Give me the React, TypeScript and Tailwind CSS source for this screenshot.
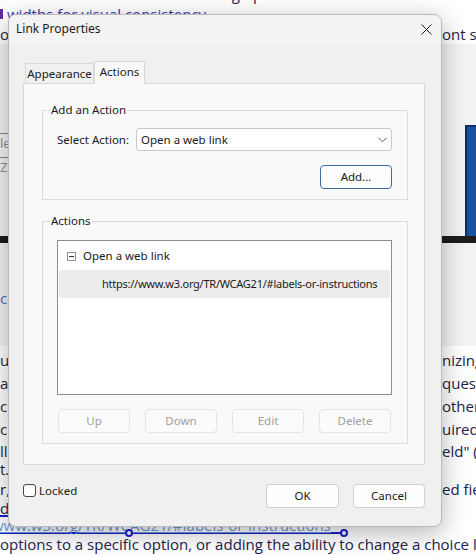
import React from "react";

function DocLine({ left, right, h }: { left: React.ReactNode; right?: React.ReactNode; h: string }) {
  return (
    <div className={"grid grid-cols-[442px_34px] leading-[20px] whitespace-nowrap " + h}>
      <span className="overflow-hidden">{left}</span>
      <span className="overflow-hidden">{right}</span>
    </div>
  );
}

function Doc() {
  return (
    <div className="flex flex-col font-['Open_Sans',sans-serif] text-[15px] text-[#23234a]">
      <div className="-mt-[16px] h-[20px] leading-[20px] whitespace-nowrap overflow-hidden">
        Make all the borders share a design p
      </div>
      <div className="h-[20px] flex items-center whitespace-nowrap overflow-hidden">
        <span className="w-[3px] h-[10px] bg-[#6a2a9a]" />
        <span className="ml-[4px] leading-[20px] text-[#3a3aa8]">widths for visual consistency.</span>
      </div>
      <DocLine h="h-[20px]" left="ollow the same styling for every input and use the same f" right="ont size" />
      <div className="flex flex-col bg-[#f3f3f3]">
        <div className="grid grid-cols-[442px_34px] h-[192px]">
          <div className="flex flex-col overflow-hidden">
            <div className="h-[89px]" />
            <div className="h-[24px] border-t border-[#8a8a8a] text-[13px] leading-[18px] text-[#8a8a8a]">legal name</div>
            <div className="h-[24px] border-t border-[#8a8a8a] text-[13px] leading-[18px] text-[#8a8a8a]">ZIP code</div>
          </div>
          <div className="flex flex-col">
            <div className="h-[81px]" />
            <div className="ml-[23px] w-[11px] h-[111px] bg-[#1b509c] border-l-2 border-t-2 border-[#0d2f66]" />
          </div>
        </div>
        <div className="h-[7px] bg-[#1c1c1c]" />
        <div className="h-[45px]" />
        <div className="h-[20px] leading-[20px] text-[#3b6fc4] whitespace-nowrap overflow-hidden">ce</div>
        <div className="h-[38px]" />
      </div>
      <div className="h-[4px]" />
      <DocLine h="h-[23px]" left="users who rely on assistive technology benefit from reco" right="nizing" />
      <DocLine h="h-[23px]" left="avoid vague labels and answer the most common ques" right="questions" />
      <DocLine h="h-[23px]" left="check that each label is distinct from every other" right="other" />
      <DocLine h="h-[22px]" left="check which fields are required and mark the req" right="uired" />
      <DocLine h="h-[18px]" left="ll fields with a clear &quot;required fi" right={"eld\" ("} />
      <DocLine h="h-[20px]" left="t.' as plain text" right="" />
      <DocLine h="h-[19px]" left="r, consider grouping the related fi" right="ed fields" />
      <DocLine h="h-[17px]" left="disabled states should remain readable" right="" />
      <div className="h-[19px] whitespace-nowrap">
        <div className="relative w-[343px] h-[19px] border-y-2 border-[#1e1ed2]">
          <span className="block leading-[17px] text-[#6b9ad8] underline overflow-hidden -ml-[8px]">
            www.w3.org/TR/WCAG21/#labels-or-instructions
          </span>
          <span className="absolute left-[125px] -bottom-[5px] w-[8px] h-[8px] rounded-full border-2 border-[#1e1ed2] bg-white" />
          <span className="absolute -right-[5px] -bottom-[5px] w-[8px] h-[8px] rounded-full border-2 border-[#1e1ed2] bg-white" />
        </div>
      </div>
      <div className="h-[20px] leading-[20px] whitespace-nowrap overflow-hidden">
        options to a specific option, or adding the ability to change a choice later
      </div>
    </div>
  );
}

function DisabledBtn({ label }: { label: string }) {
  return (
    <div className="w-[72px] h-[24px] rounded-[4px] border border-[#e5e5e5] bg-[#fbfbfb] flex items-center justify-center text-[#a0a0a0]">
      {label}
    </div>
  );
}

function Dialog() {
  return (
    <div className="absolute left-[8px] top-[14px] w-[434px] h-[513px] rounded-[8px] border border-[#b9b9b9] bg-[#f0f0f0] shadow-[0_6px_26px_rgba(0,0,0,0.3)] flex flex-col overflow-hidden font-['Noto_Sans',sans-serif] text-[11.5px] text-[#1a1a1a]">
      <div className="h-[29px] shrink-0 bg-[#f3f3f3] flex items-center justify-between pl-[7px] pr-[9px]">
        <span className="text-[12px] -mt-[1px]">Link Properties</span>
        <svg width="11" height="11" viewBox="0 0 11 11">
          <path d="M0.5 0.5L10.5 10.5M10.5 0.5L0.5 10.5" stroke="#1a1a1a" strokeWidth="1" />
        </svg>
      </div>
      <div className="flex flex-col px-[14px] pt-[17px]">
        <div className="flex items-end h-[22px] pl-[2px] relative z-10">
          <div className="h-[20px] w-[69px] border border-b-0 border-[#d9d9d9] bg-[#f0f0f0] flex items-center justify-center">
            Appearance
          </div>
          <div className="h-[23px] w-[51px] -mb-[1px] border border-b-0 border-[#d9d9d9] bg-[#f9f9f9] flex items-center justify-center pb-[2px]">
            Actions
          </div>
        </div>
        <div className="w-[402px] h-[382px] border border-[#d9d9d9] bg-[#f9f9f9] flex flex-col pl-[18px]">
          <div className="relative mt-[26px] w-[366px] h-[90px] border border-[#dcdcdc] flex flex-col">
            <span className="absolute left-[7px] -top-[9px] px-[1px] bg-[#f9f9f9] leading-[16px]">Add an Action</span>
            <div className="flex items-center mt-[17px] pl-[14px]">
              <span className="w-[79px]">Select Action:</span>
              <div className="w-[256px] h-[23px] rounded-[3px] border border-[#c8c8c8] bg-white flex items-center justify-between pl-[4px] pr-[4px]">
                <span>Open a web link</span>
                <svg width="9" height="6" viewBox="0 0 9 6">
                  <path d="M0.5 0.8L4.5 4.8L8.5 0.8" stroke="#5a5a5a" strokeWidth="1" fill="none" />
                </svg>
              </div>
            </div>
            <div className="self-end mr-[15px] mt-[14px] w-[72px] h-[24px] rounded-[4px] border border-[#3d6aa0] bg-[#fdfdfd] flex items-center justify-center">
              Add...
            </div>
          </div>
          <div className="relative mt-[21px] w-[366px] h-[223px] border border-[#dcdcdc] flex flex-col">
            <span className="absolute left-[7px] -top-[9px] px-[1px] bg-[#f9f9f9] leading-[16px]">Actions</span>
            <div className="ml-[14px] mt-[18px] w-[335px] h-[155px] border border-[#8c8c96] bg-white flex flex-col px-[1px] pt-[1px]">
              <div className="h-[28px] flex items-center pl-[8px]">
                <span className="w-[9px] h-[9px] border border-[#909090] flex items-center justify-center">
                  <span className="w-[5px] h-px bg-[#333]" />
                </span>
                <span className="ml-[7px]">Open a web link</span>
              </div>
              <div className="h-[28px] flex items-center pl-[43px] bg-[#ececec] whitespace-nowrap overflow-hidden text-[11px] tracking-[-0.25px]">
                https://www.w3.org/TR/WCAG21/#labels-or-instructions
              </div>
            </div>
            <div className="flex gap-[15px] pl-[15px] mt-[14px]">
              <DisabledBtn label="Up" />
              <DisabledBtn label="Down" />
              <DisabledBtn label="Edit" />
              <DisabledBtn label="Delete" />
            </div>
          </div>
        </div>
        <div className="w-[402px] flex items-start justify-between mt-[19px]">
          <div className="flex items-center h-[13px]">
            <span className="w-[13px] h-[13px] rounded-[3px] border border-[#444] bg-white" />
            <span className="ml-[3px]">Locked</span>
          </div>
          <div className="flex gap-[14px]">
            <div className="w-[73px] h-[24px] rounded-[4px] border border-[#d0d0d0] bg-[#fdfdfd] flex items-center justify-center">OK</div>
            <div className="w-[72px] h-[24px] rounded-[4px] border border-[#d0d0d0] bg-[#fdfdfd] flex items-center justify-center">Cancel</div>
          </div>
        </div>
      </div>
    </div>
  );
}

export default function App() {
  return (
    <div className="relative w-[476px] h-[555px] overflow-hidden bg-white">
      <Doc />
      <Dialog />
    </div>
  );
}
